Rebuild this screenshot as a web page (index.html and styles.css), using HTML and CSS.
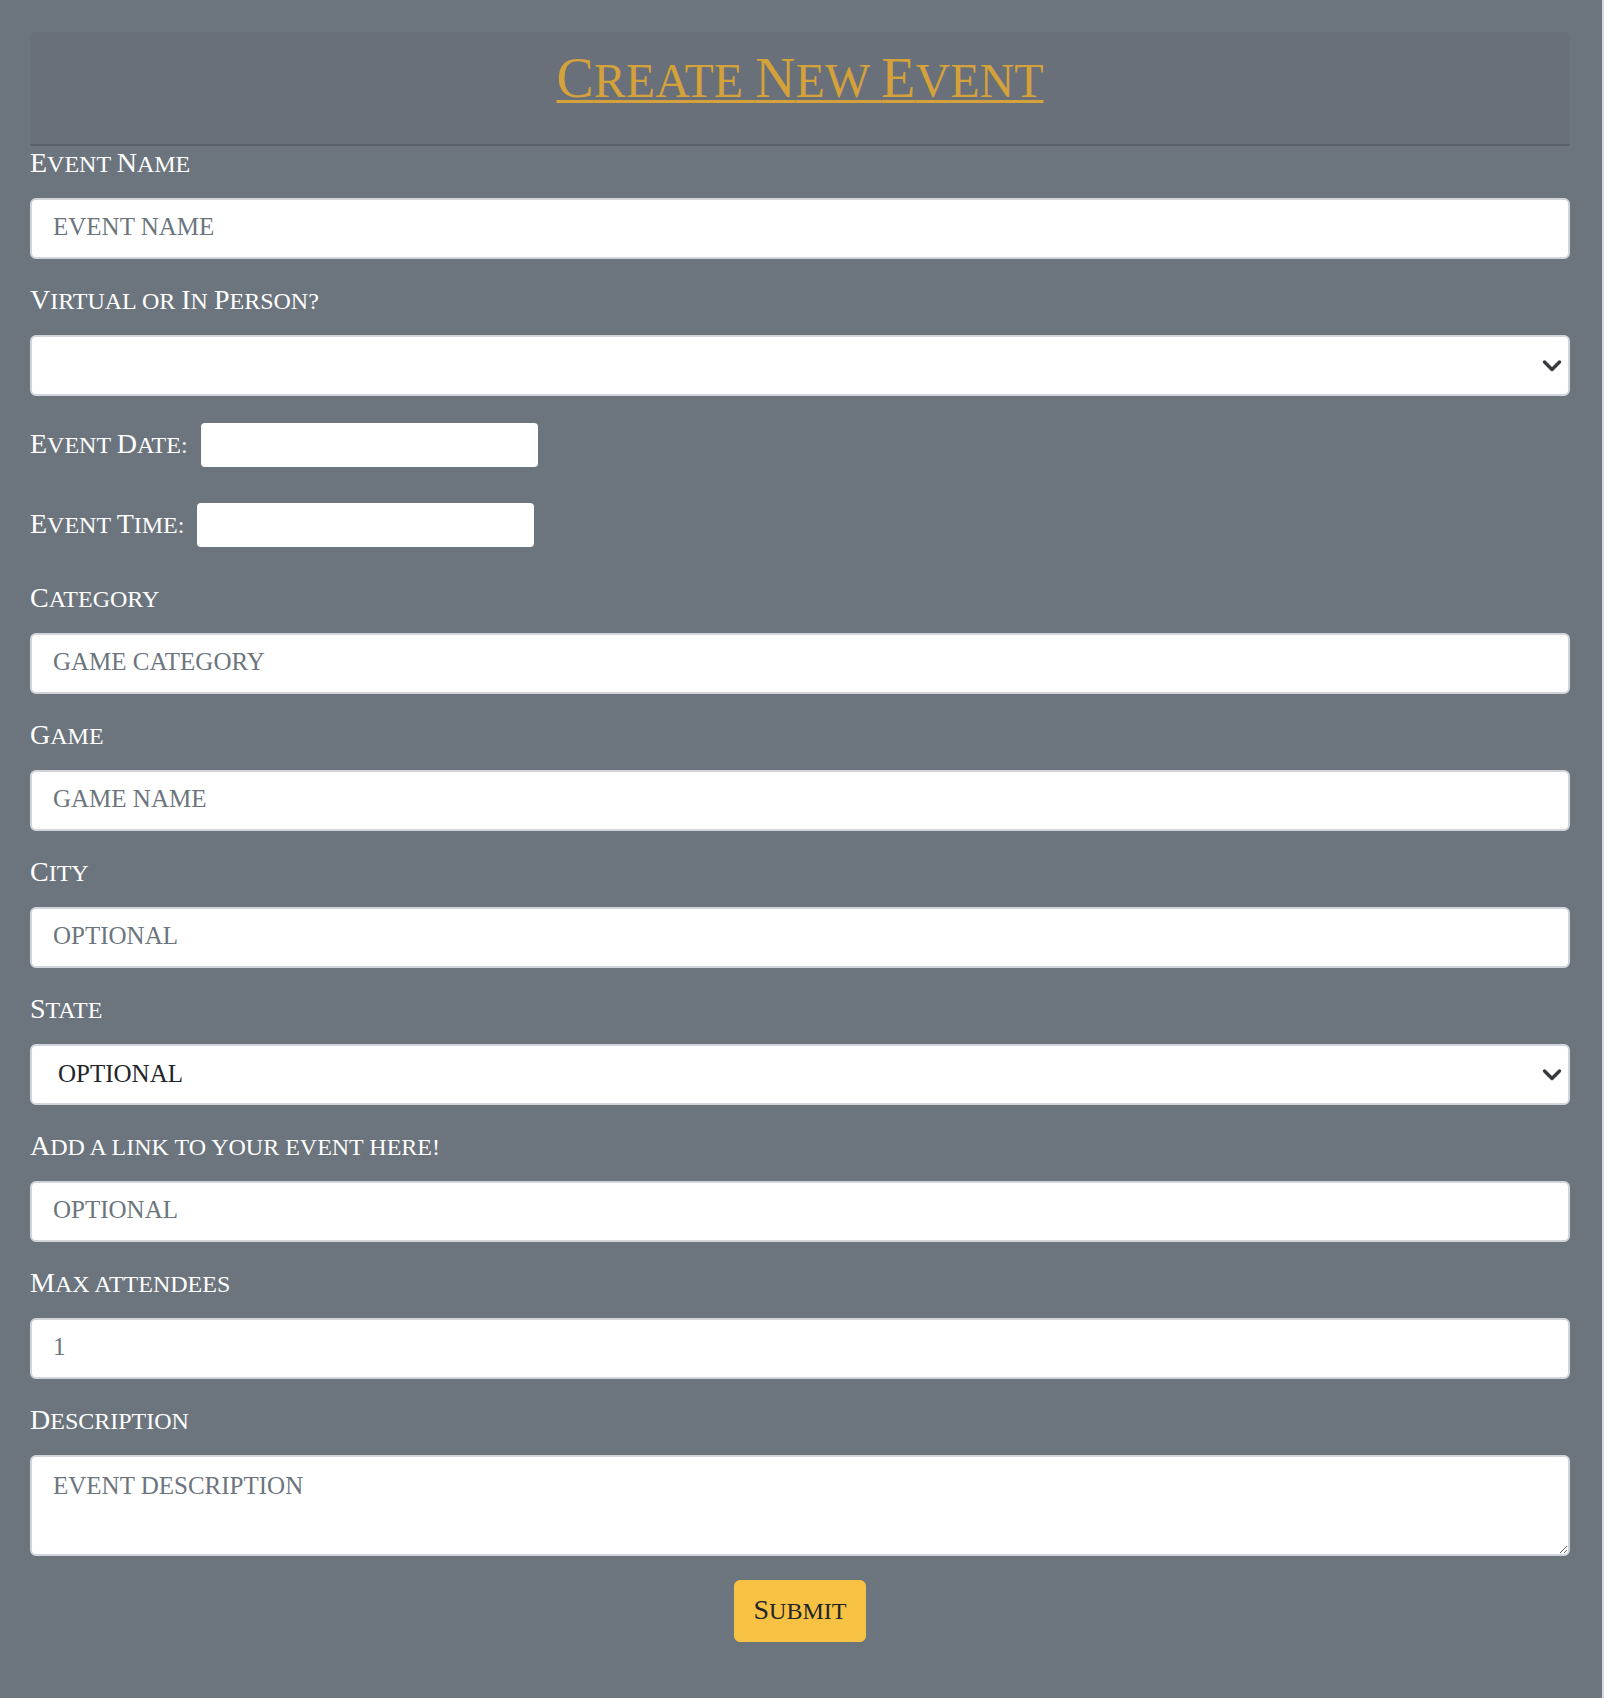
FILE: index.html
```html
<!DOCTYPE html>
<html lang="en">
<head>
<meta charset="utf-8">
<title>Create New Event</title>
<link rel="stylesheet" href="styles.css">
</head>
<body>
<main class="card">
  <header class="card-header">
    <h1 class="title"><span class="cap">C</span>reate <span class="cap">N</span>ew <span class="cap">E</span>vent</h1>
  </header>
  <form class="event-form">
    <div class="group">
      <label class="lbl" for="eventName"><span class="cap">E</span>vent <span class="cap">N</span>ame</label>
      <input class="control" id="eventName" type="text" placeholder="Event Name">
    </div>
    <div class="group">
      <label class="lbl" for="eventType"><span class="cap">V</span>irtual or <span class="cap">I</span>n <span class="cap">P</span>erson?</label>
      <div class="select-wrap">
        <select class="control select" id="eventType">
          <option value="" selected></option>
          <option value="virtual">Virtual</option>
          <option value="in-person">In Person</option>
        </select>
        <svg class="chev" viewBox="0 0 20 14" aria-hidden="true"><path d="M2.5 3 L10 10.5 L17.5 3" fill="none" stroke="#343a40" stroke-width="3.4" stroke-linecap="round" stroke-linejoin="round"/></svg>
      </div>
    </div>
    <div class="inline-row date-row">
      <label class="lbl" for="eventDate"><span class="cap">E</span>vent <span class="cap">D</span>ate:</label>
      <input class="dt" id="eventDate" type="date">
    </div>
    <div class="inline-row time-row">
      <label class="lbl" for="eventTime"><span class="cap">E</span>vent <span class="cap">T</span>ime:</label>
      <input class="dt" id="eventTime" type="time">
    </div>
    <div class="group">
      <label class="lbl" for="category"><span class="cap">C</span>ategory</label>
      <input class="control" id="category" type="text" placeholder="Game Category">
    </div>
    <div class="group">
      <label class="lbl" for="game"><span class="cap">G</span>ame</label>
      <input class="control" id="game" type="text" placeholder="Game Name">
    </div>
    <div class="group">
      <label class="lbl" for="city"><span class="cap">C</span>ity</label>
      <input class="control" id="city" type="text" placeholder="Optional">
    </div>
    <div class="group">
      <label class="lbl" for="state"><span class="cap">S</span>tate</label>
      <div class="select-wrap">
        <select class="control select" id="state">
          <option value="" selected>Optional</option>
          <option>Alabama</option>
          <option>Alaska</option>
          <option>Arizona</option>
          <option>California</option>
          <option>Colorado</option>
          <option>New York</option>
          <option>Texas</option>
        </select>
        <svg class="chev" viewBox="0 0 20 14" aria-hidden="true"><path d="M2.5 3 L10 10.5 L17.5 3" fill="none" stroke="#343a40" stroke-width="3.4" stroke-linecap="round" stroke-linejoin="round"/></svg>
      </div>
    </div>
    <div class="group">
      <label class="lbl" for="link"><span class="cap">A</span>dd a link to your event here!</label>
      <input class="control" id="link" type="text" placeholder="Optional">
    </div>
    <div class="group">
      <label class="lbl" for="maxAttendees"><span class="cap">M</span>ax attendees</label>
      <input class="control" id="maxAttendees" type="number" min="1" placeholder="1">
    </div>
    <div class="group">
      <label class="lbl" for="description"><span class="cap">D</span>escription</label>
      <textarea class="control area" id="description" placeholder="Event description"></textarea>
    </div>
    <div class="actions">
      <button class="btn" type="submit"><span class="cap">S</span>ubmit</button>
    </div>
  </form>
</main>
</body>
</html>
```
FILE: styles.css
```css
* {
  box-sizing: border-box;
}

html {
  background: #6c757d;
}

body {
  margin: 0;
  min-height: 100vh;
  padding: 32px 32px 0 30px;
  background: #6c757d;
  border-right: 2px solid #d8d9db;
  font-family: "Liberation Serif", "DejaVu Serif", serif;
  color: #ffffff;
}

.card-header {
  background: #697079;
  border-bottom: 2px solid #5b6169;
  border-radius: 6px 6px 0 0;
  padding: 19px 20px 33px;
}

.title {
  margin: 0;
  text-align: center;
  font-size: 48px;
  line-height: 60px;
  font-weight: 400;
  color: #d4a13b;
  text-transform: uppercase;
  text-decoration: underline;
  text-decoration-thickness: 3px;
  text-underline-offset: 3px;
}

.cap {
  font-size: 1.1667em;
  line-height: 0;
}

.group {
  margin-bottom: 24px;
}

.lbl {
  display: block;
  font-size: 24px;
  line-height: 36px;
  margin-bottom: 16px;
  text-transform: uppercase;
  color: #ffffff;
}

.control {
  display: block;
  width: 100%;
  height: 61px;
  margin: 0;
  border: 2px solid #d1d5da;
  border-radius: 6px;
  background: #ffffff;
  padding: 0 20px 3px 21px;
  font-family: "Liberation Serif", "DejaVu Serif", serif;
  font-size: 25px;
  color: #495057;
  text-transform: uppercase;
  outline: none;
}

.control::placeholder {
  color: #6c757d;
  opacity: 1;
  text-transform: uppercase;
}

.control::-webkit-inner-spin-button,
.control::-webkit-outer-spin-button {
  -webkit-appearance: none;
  margin: 0;
}

.select {
  -webkit-appearance: none;
  appearance: none;
  padding-left: 26px;
  color: #212529;
}

.select-wrap {
  position: relative;
}

.chev {
  position: absolute;
  right: 8px;
  top: 50%;
  width: 20px;
  height: 14px;
  margin-top: -7px;
  pointer-events: none;
}

.inline-row {
  display: flex;
  align-items: center;
  gap: 13px;
  height: 50px;
}

.inline-row .lbl {
  margin: 0;
}

.date-row {
  margin-bottom: 30px;
}

.time-row {
  margin-bottom: 31px;
}

.dt {
  width: 337px;
  height: 44px;
  margin: 0;
  padding: 0;
  border: none;
  border-radius: 4px;
  background: #ffffff;
  color: transparent;
  font-family: "Liberation Serif", serif;
  outline: none;
}

.dt::-webkit-calendar-picker-indicator {
  display: none;
}

.dt::-webkit-datetime-edit {
  color: transparent;
}

.area {
  height: 101px;
  padding: 10px 20px 10px 21px;
  line-height: 37.5px;
  resize: both;
}

.actions {
  display: flex;
  justify-content: center;
}

.btn {
  height: 62px;
  margin: 0;
  padding: 0 19px;
  background: #f7c244;
  border: 1px solid #f7c244;
  border-radius: 6px;
  color: #212529;
  font-family: "Liberation Serif", "DejaVu Serif", serif;
  font-size: 24px;
  line-height: 60px;
  text-transform: uppercase;
  cursor: pointer;
}
```
